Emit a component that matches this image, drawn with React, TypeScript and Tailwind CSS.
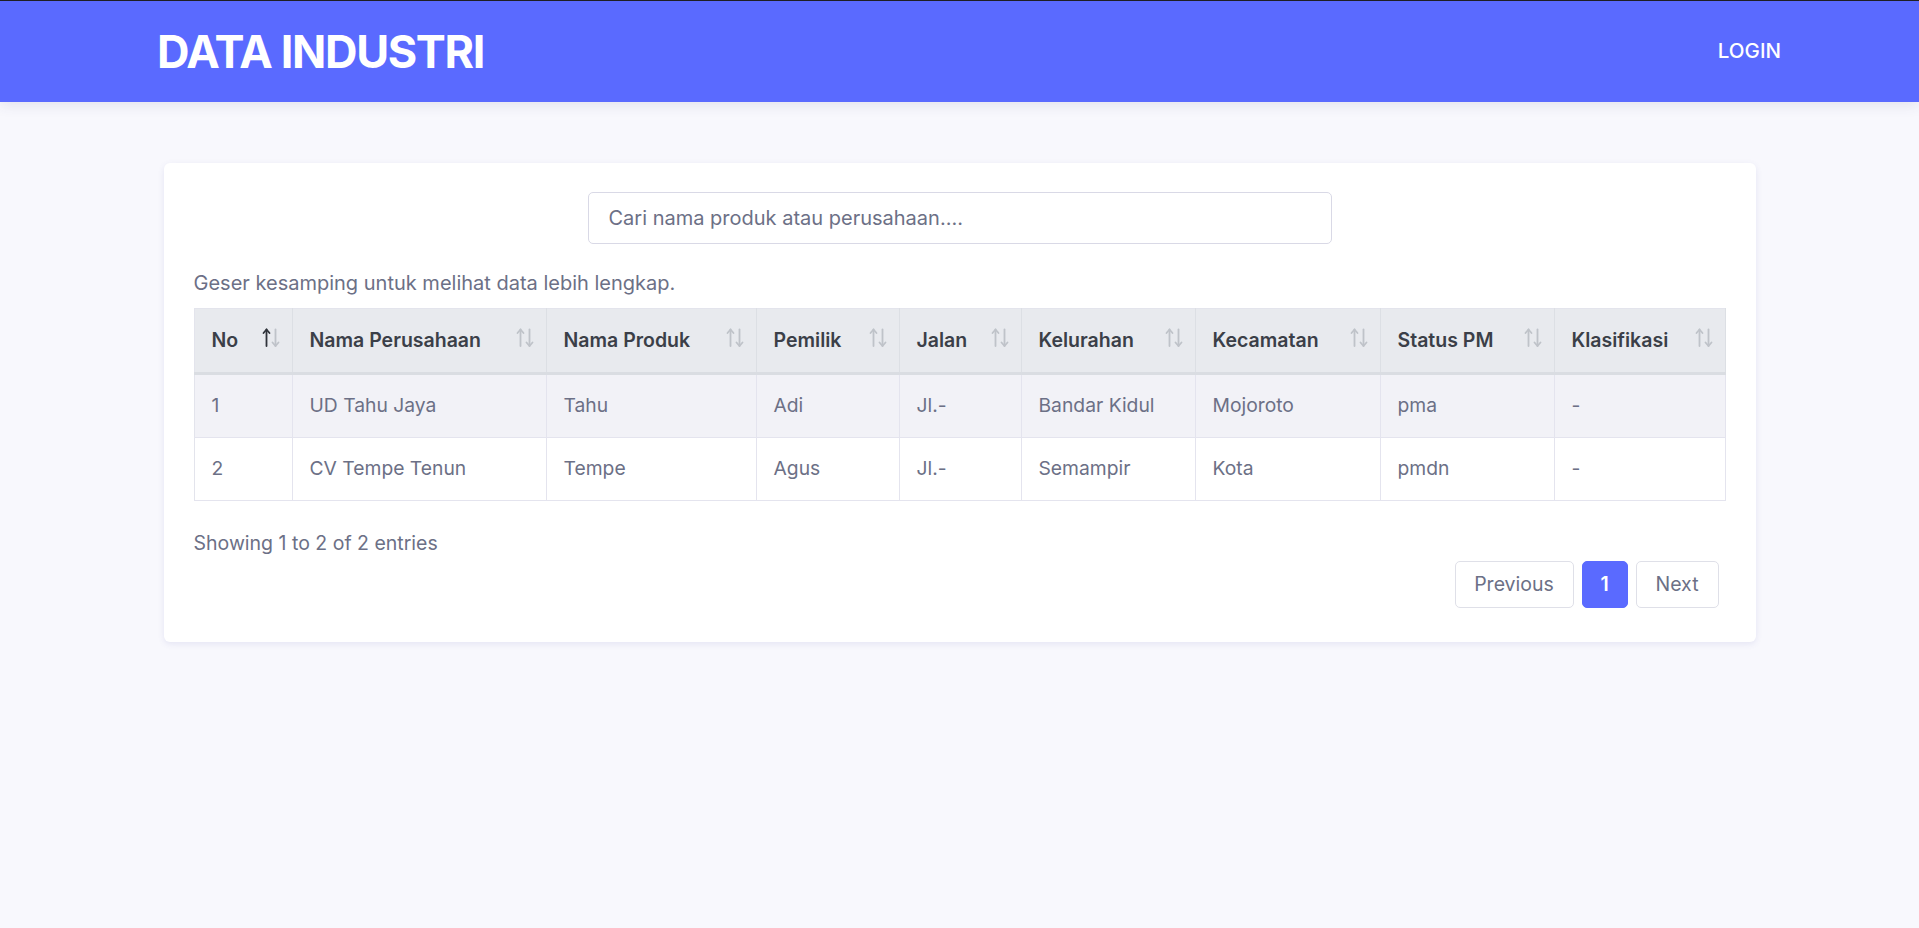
import React from 'react';

const columns = [
  { label: 'No', width: 'w-[98px]' },
  { label: 'Nama Perusahaan', width: 'w-[254px]' },
  { label: 'Nama Produk', width: 'w-[210px]' },
  { label: 'Pemilik', width: 'w-[143px]' },
  { label: 'Jalan', width: 'w-[122px]' },
  { label: 'Kelurahan', width: 'w-[174px]' },
  { label: 'Kecamatan', width: 'w-[185px]' },
  { label: 'Status PM', width: 'w-[174px]' },
  { label: 'Klasifikasi', width: 'w-[171px]' },
];

const rows = [
  ['1', 'UD Tahu Jaya', 'Tahu', 'Adi', 'Jl.-', 'Bandar Kidul', 'Mojoroto', 'pma', '-'],
  ['2', 'CV Tempe Tenun', 'Tempe', 'Agus', 'Jl.-', 'Semampir', 'Kota', 'pmdn', '-'],
];

const SortIcon: React.FC<{ active?: boolean }> = ({ active }) => (
  <svg width="20" height="21" viewBox="0 0 20 21" className="shrink-0">
    <g stroke={active ? '#2f333a' : '#bfc3c9'} strokeWidth="1.8" fill="none" strokeLinecap="round" strokeLinejoin="round">
      <path d="M5.5 19V2.5" />
      <path d="M2.5 6L5.5 2.5L8.5 6" />
    </g>
    <g stroke="#bfc3c9" strokeWidth="1.8" fill="none" strokeLinecap="round" strokeLinejoin="round">
      <path d="M14.5 2.5V19" />
      <path d="M11.5 15.5L14.5 19L17.5 15.5" />
    </g>
  </svg>
);

const App: React.FC = () => {
  return (
    <div className="min-h-screen bg-[#f8f8fd] font-['Inter',sans-serif]">
      <header className="h-[102px] border-t border-[#1f1f24] bg-[#5a6aff] shadow-[0_4px_12px_rgba(60,60,120,0.10)]">
        <div className="flex h-full items-center justify-between pl-[157px] pr-[138px]">
          <h1 className="text-[45px] font-bold tracking-[-0.03em] text-white leading-none">
            DATA INDUSTRI
          </h1>
          <a className="text-[20.5px] font-medium text-white">LOGIN</a>
        </div>
      </header>

      <main className="pt-[61px]">
        <div className="mx-auto w-[1592px] rounded-md bg-white px-[30px] pt-[29px] pb-[34px] shadow-[0_2px_6px_rgba(90,90,170,0.12)]">
          <div className="flex justify-center">
            <input
              type="text"
              placeholder="Cari nama produk atau perusahaan...."
              className="h-[52px] w-[744px] rounded-[5px] border border-[#d9d9e6] px-[20px] text-[20px] text-[#5d6275] placeholder:text-[#6c7086] outline-none"
            />
          </div>

          <p className="mt-[24px] text-[20px] leading-[30px] text-[#6c7086]">
            Geser kesamping untuk melihat data lebih lengkap.
          </p>

          <table className="mt-[10px] w-full table-fixed border-collapse border border-[#e3e4ec]">
            <thead>
              <tr className="bg-[#e8eaee]">
                {columns.map((col, i) => (
                  <th
                    key={col.label}
                    className={`${col.width} h-[65px] border-r border-b-[3px] border-r-[#dcdfe4] border-b-[#dadde2] pl-[17px] pr-[11px] text-left text-[19.5px] font-semibold text-[#3b3f48]`}
                  >
                    <div className="flex items-center justify-between">
                      <span className="whitespace-nowrap">{col.label}</span>
                      <span className="-mt-[6px]">
                        <SortIcon active={i === 0} />
                      </span>
                    </div>
                  </th>
                ))}
              </tr>
            </thead>
            <tbody>
              {rows.map((row, r) => (
                <tr key={r} className={r === 0 ? 'bg-[#f2f2f7]' : 'bg-white'}>
                  {row.map((cell, c) => (
                    <td
                      key={c}
                      className="h-[63.5px] border-r border-b border-[#e4e4ee] px-[17px] text-[19.3px] text-[#6c7086] whitespace-nowrap"
                    >
                      {cell}
                    </td>
                  ))}
                </tr>
              ))}
            </tbody>
          </table>

          <p className="mt-[27px] text-[19.5px] leading-[30px] text-[#6c7086]">
            Showing 1 to 2 of 2 entries
          </p>

          <div className="mt-[3px] flex justify-end gap-[8px] pr-[7px]">
            <button className="h-[47px] w-[119px] rounded-[5px] border border-[#dfe0e8] bg-white text-[19.5px] text-[#6c7086]">
              Previous
            </button>
            <button className="h-[47px] w-[46px] rounded-[5px] border border-[#5a6aff] bg-[#5a6aff] text-[19.5px] font-semibold text-white">
              1
            </button>
            <button className="h-[47px] w-[83px] rounded-[5px] border border-[#dfe0e8] bg-white text-[19.5px] text-[#6c7086]">
              Next
            </button>
          </div>
        </div>
      </main>
    </div>
  );
};

export default App;
